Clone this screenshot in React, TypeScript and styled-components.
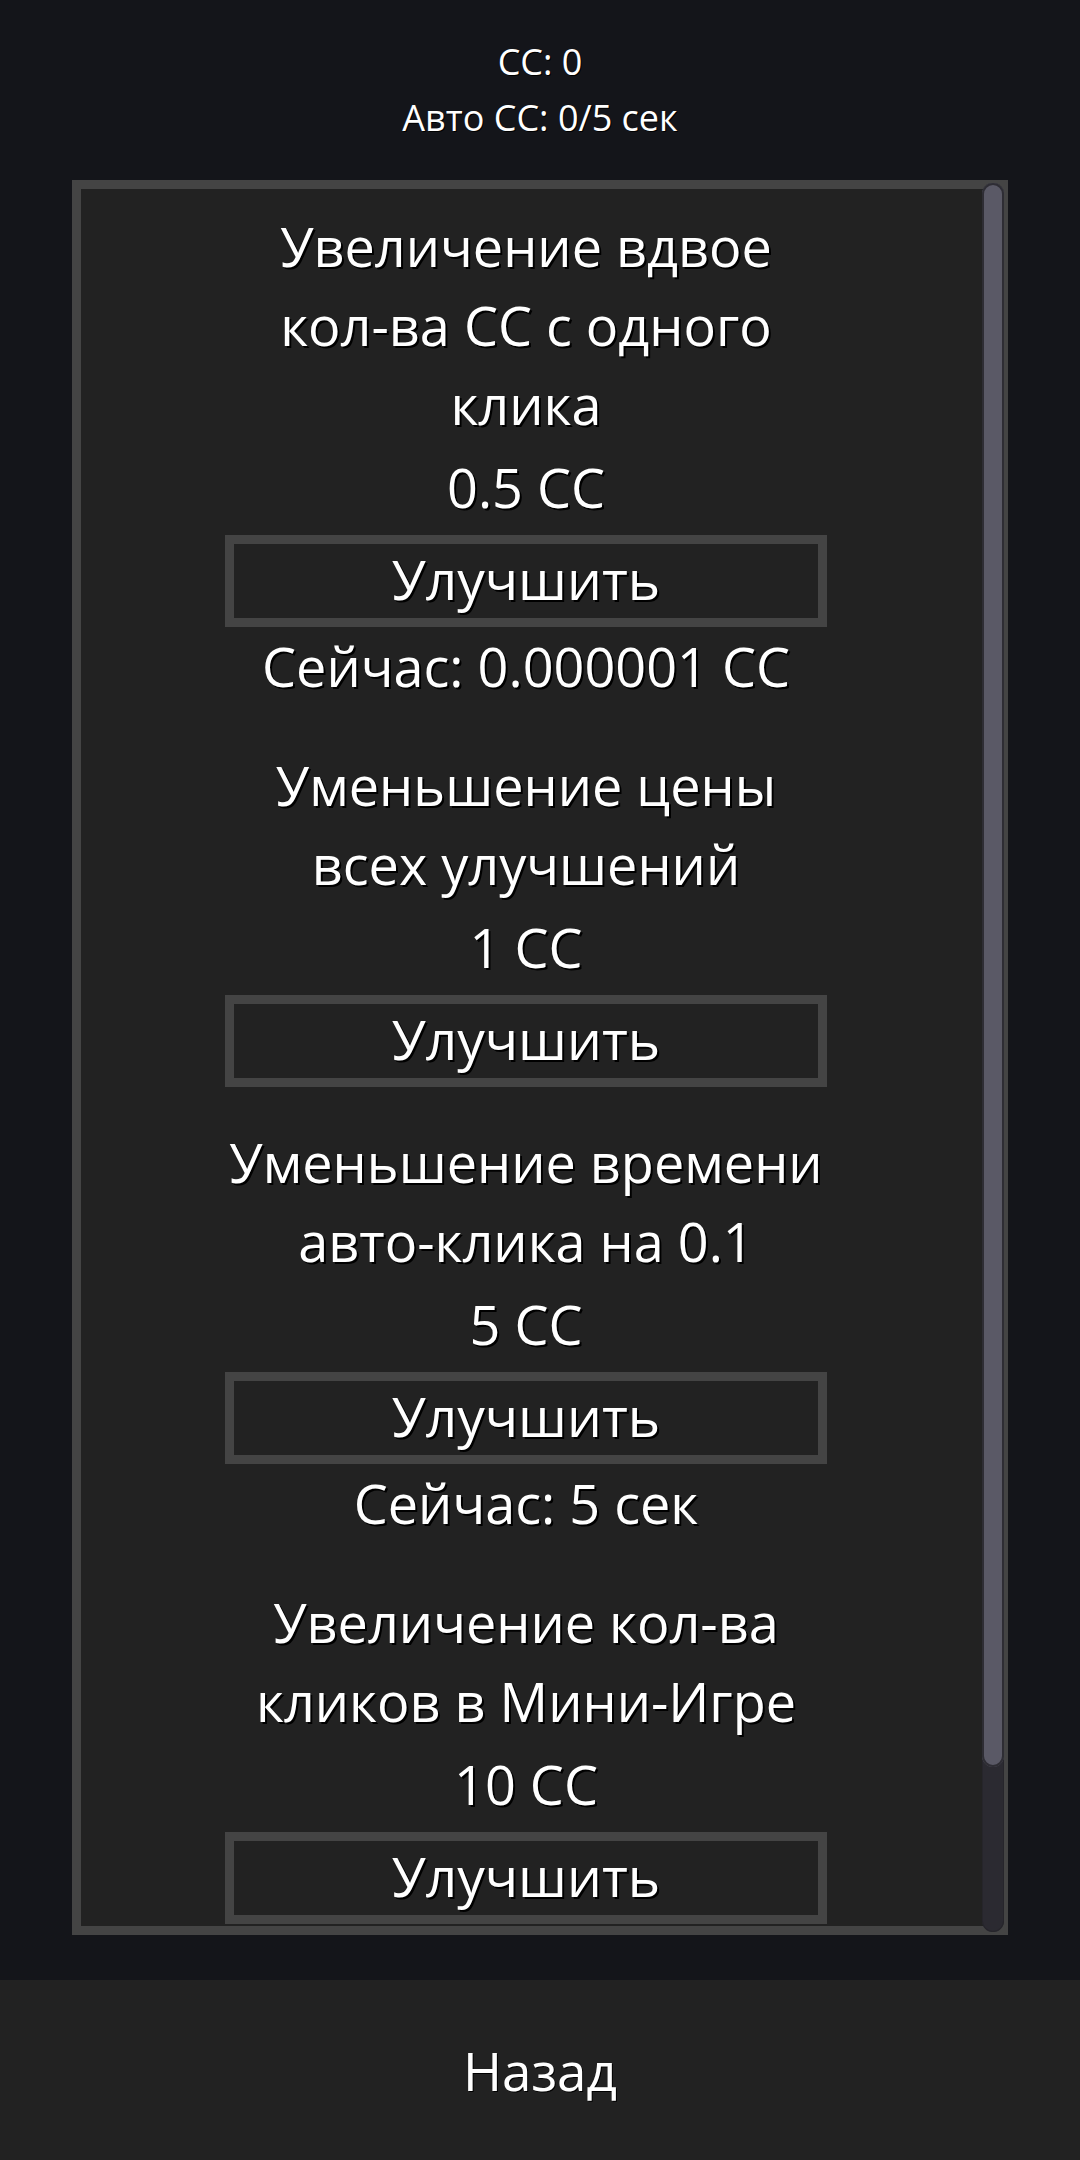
import React, {FC} from 'react';
import styled, {createGlobalStyle} from 'styled-components';

const GlobalStyle = createGlobalStyle`
  html, body {
    margin: 0;
    padding: 0;
    background: #14151a;
  }
  body {
    font-family: "Open Sans", "Noto Sans", sans-serif;
    color: #fff;
  }
`

const Screen = styled.div`
  width: 1080px;
  height: 2160px;
  display: flex;
  flex-direction: column;
  background: #14151a;
  overflow: hidden;
`

const Header = styled.div`
  display: flex;
  flex-direction: column;
  align-items: center;
  gap: 12px;
  padding: 40px 0;
`

const Stat = styled.div`
  font-size: 36px;
  line-height: 44px;
  text-shadow: 1px 1px 0 #000;
`

const Panel = styled.div`
  flex: 1;
  margin: 0 72px 45px;
  border: 9px solid #444;
  background: #222;
  position: relative;
  min-height: 0;
`

const Scroller = styled.div`
  height: 100%;
  overflow: hidden;
  padding: 22px 28px 0 0;
  box-sizing: border-box;
  display: flex;
  flex-direction: column;
  align-items: center;
  gap: 40px;
`

const Upgrade = styled.div`
  display: flex;
  flex-direction: column;
  align-items: center;
  gap: 4px;
`

const Label = styled.div`
  font-size: 54px;
  line-height: 79px;
  margin-top: -4px;
  padding-bottom: 4px;
  white-space: nowrap;
  text-align: center;
  text-shadow: 2px 2px 0 #000;
`

const UpgradeButton = styled.button`
  width: 602px;
  height: 92px;
  box-sizing: border-box;
  border: 9px solid #444;
  background: #222;
  color: #fff;
  font-family: inherit;
  font-size: 55px;
  line-height: 70px;
  padding: 0 0 4px;
  text-shadow: 2px 2px 0 #000;
`

const Track = styled.div`
  position: absolute;
  top: -6px;
  bottom: -6px;
  right: -5px;
  width: 22px;
  border-radius: 11px;
  background: #2b2a31;
  box-shadow: inset 0 0 0 1px #26252b;
`

const Thumb = styled.div`
  width: 100%;
  border-radius: 11px;
  background: #5a5966;
  box-shadow: inset 0 0 0 2px #2e2d34;
`

const BottomBar = styled.div`
  height: 180px;
  background: #222;
  display: flex;
  align-items: center;
  justify-content: center;
  font-size: 53px;
  text-shadow: 1px 1px 0 #000;
`

interface UpgradeData {
  title: string[]
  cost: string
  current?: string
}

const upgrades: UpgradeData[] = [
  {title: ['Увеличение вдвое', 'кол-ва СС с одного', 'клика'], cost: '0.5 СС', current: 'Сейчас: 0.000001 СС'},
  {title: ['Уменьшение цены', 'всех улучшений'], cost: '1 СС'},
  {title: ['Уменьшение времени', 'авто-клика на 0.1'], cost: '5 СС', current: 'Сейчас: 5 сек'},
  {title: ['Увеличение кол-ва', 'кликов в Мини-Игре'], cost: '10 СС'},
]

const UpgradeItem: FC<{ data: UpgradeData }> = ({data}) =>
  <Upgrade>
    <Label>
      {data.title.map((line, i) => <div key={i}>{line}</div>)}
    </Label>
    <Label>{data.cost}</Label>
    <UpgradeButton>Улучшить</UpgradeButton>
    {data.current && <Label>{data.current}</Label>}
  </Upgrade>

const App: FC = () =>
  <Screen>
    <GlobalStyle/>
    <Header>
      <Stat>СС: 0</Stat>
      <Stat>Авто СС: 0/5 сек</Stat>
    </Header>
    <Panel>
      <Scroller>
        {upgrades.map((u, i) => <UpgradeItem key={i} data={u}/>)}
      </Scroller>
      <Track>
        <Thumb style={{height: `${(1584 / 1749) * 100}%`}}/>
      </Track>
    </Panel>
    <BottomBar>Назад</BottomBar>
  </Screen>

export default App
